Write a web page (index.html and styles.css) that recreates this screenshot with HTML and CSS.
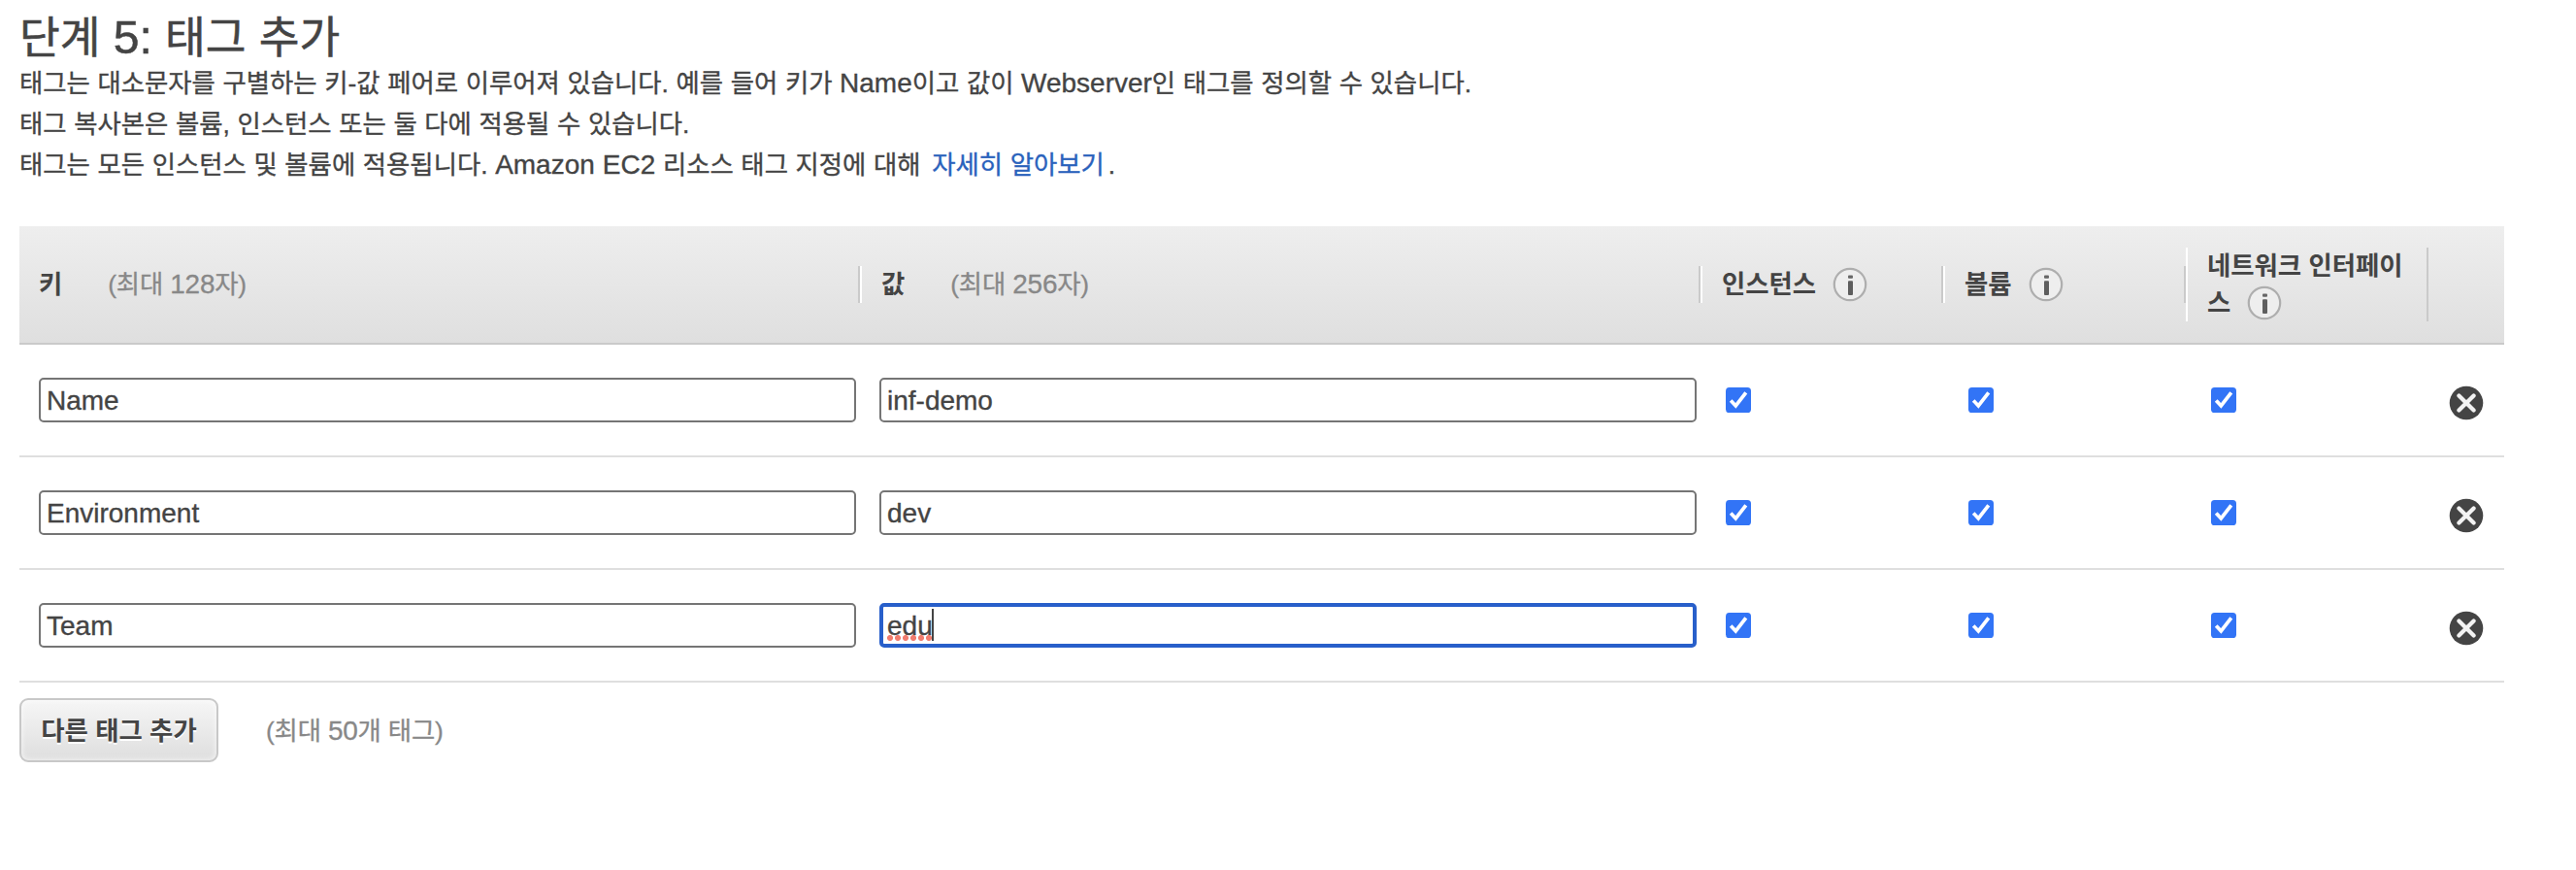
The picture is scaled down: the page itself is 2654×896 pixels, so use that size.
FILE: index.html
```html
<!DOCTYPE html>
<html lang="ko">
<head>
<meta charset="utf-8">
<title>단계 5: 태그 추가</title>
<link rel="stylesheet" href="styles.css">
</head>
<body>
<svg class="defs" width="0" height="0" aria-hidden="true">
  <symbol id="info" viewBox="0 0 36 36">
    <circle cx="18" cy="18" r="16.2" fill="#eee" stroke="#aeaeae" stroke-width="2.2"/>
    <rect x="16" y="8.4" width="5" height="3.4" rx="1" fill="#666"/>
    <rect x="16" y="14.2" width="5" height="14.8" rx="1" fill="#5e5e5e"/>
  </symbol>
  <symbol id="remove" viewBox="0 0 36 36">
    <circle cx="18" cy="18" r="17.3" fill="#444"/>
    <path d="M10.4 10.4 25.6 25.6M25.6 10.4 10.4 25.6" stroke="#f2f2f2" stroke-width="4.2" stroke-linecap="round"/>
  </symbol>
  <symbol id="check" viewBox="0 0 26 26">
    <rect width="26" height="26" rx="3.6" fill="#3274f6"/>
    <path d="M5.2 13.4 10.3 18.9 20.8 5.3" fill="none" stroke="#fff" stroke-width="3.7"/>
  </symbol>
</svg>
<main class="page">
  <h1 class="title">단계 <span class="latin">5:</span> 태그 추가</h1>
  <div class="intro">
    <p>태그는 대소문자를 구별하는 키-값 페어로 이루어져 있습니다. 예를 들어 키가 <span class="latin">Name</span>이고 값이 <span class="latin">Webserver</span>인 태그를 정의할 수 있습니다.</p>
    <p>태그 복사본은 볼륨, 인스턴스 또는 둘 다에 적용될 수 있습니다.</p>
    <p>태그는 모든 인스턴스 및 볼륨에 적용됩니다. <span class="latin">Amazon EC2</span> 리소스 태그 지정에 대해 <a class="link">자세히 알아보기</a>.</p>
  </div>

  <section class="table">
    <div class="row head">
      <div class="th">키<span class="hint">(최대 <span class="latin">128</span>자)</span></div>
      <div class="th">값<span class="hint">(최대 <span class="latin">256</span>자)</span></div>
      <div class="th">인스턴스<svg class="info"><use href="#info"/></svg></div>
      <div class="th">볼륨<svg class="info"><use href="#info"/></svg></div>
      <div class="th">네트워크 인터페이<br>스<svg class="info"><use href="#info"/></svg></div>
      <div class="th"></div>
    </div>
    <div class="row">
      <div class="td"><div class="field">Name</div></div>
      <div class="td"><div class="field">inf-demo</div></div>
      <div class="td"><svg class="check"><use href="#check"/></svg></div>
      <div class="td"><svg class="check"><use href="#check"/></svg></div>
      <div class="td"><svg class="check"><use href="#check"/></svg></div>
      <div class="td"><svg class="remove"><use href="#remove"/></svg></div>
    </div>
    <div class="row">
      <div class="td"><div class="field">Environment</div></div>
      <div class="td"><div class="field">dev</div></div>
      <div class="td"><svg class="check"><use href="#check"/></svg></div>
      <div class="td"><svg class="check"><use href="#check"/></svg></div>
      <div class="td"><svg class="check"><use href="#check"/></svg></div>
      <div class="td"><svg class="remove"><use href="#remove"/></svg></div>
    </div>
    <div class="row">
      <div class="td"><div class="field">Team</div></div>
      <div class="td"><div class="field focused"><span class="typed">edu</span></div></div>
      <div class="td"><svg class="check"><use href="#check"/></svg></div>
      <div class="td"><svg class="check"><use href="#check"/></svg></div>
      <div class="td"><svg class="check"><use href="#check"/></svg></div>
      <div class="td"><svg class="remove"><use href="#remove"/></svg></div>
    </div>
  </section>

  <div class="footer">
    <button class="add">다른 태그 추가</button>
    <span class="limit">(최대 <span class="latin">50</span>개 태그)</span>
  </div>
</main>
</body>
</html>
```

FILE: styles.css
```css
* { box-sizing: border-box; }

body {
  margin: 0;
  background: #fff;
  color: #444;
  font-family: "Liberation Sans", "Noto Sans CJK KR", sans-serif;
  font-size: 26.4px;
}

.defs { position: absolute; }

.page { padding: 14px 74px 0 20px; }

/* Latin runs are set slightly larger than the Hangul around them */
.latin { font-size: 1.06em; line-height: 1; }

.title {
  margin: 0;
  font-size: 45.4px;
  font-weight: 400;
  line-height: 51px;
  word-spacing: .6px;
  -webkit-text-stroke: .5px currentColor;
}

.intro { height: 168px; -webkit-text-stroke: .35px currentColor; }
.intro p { margin: 0; line-height: 42px; white-space: nowrap; word-spacing: .3px; }
.link { color: #2a62bc; margin: 0 4px 0 4px; }

.row {
  display: grid;
  grid-template-columns: 866px 866px 250px 250px 250px 78px;
  align-items: center;
  height: 116px;
  border-bottom: 2px solid #dfdfdf;
}

.head {
  height: 122px;
  background: linear-gradient(#eee, #dfdfdf);
  border-bottom-color: #cacaca;
}

.th {
  min-height: 38px;
  padding-left: 20px;
  border-left: 2px solid #fff;
  border-right: 2px solid #cacaca;
  font-weight: 700;
  line-height: 38px;
  white-space: nowrap;
}
.th:first-child { border-left-color: transparent; padding-left: 18px; }
.th:last-child { border: 0; }

.hint {
  margin-left: 47px;
  color: #888;
  font-weight: 400;
  letter-spacing: -.2px;
  -webkit-text-stroke: .3px currentColor;
}

.info {
  width: 36px;
  height: 36px;
  margin: -4px 0 -4px 17px;
  vertical-align: -9px;
  transform: translateY(-4px);
}

.td { padding-left: 20px; }
.td:nth-child(3), .td:nth-child(4), .td:nth-child(5) { padding-left: 26px; }
.td:last-child { padding-left: 21px; }

.field {
  width: 842px;
  height: 46px;
  padding: 1px 0 0 6px;
  border: 2px solid #757575;
  border-radius: 5px;
  font-size: 28px;
  line-height: 42px;
  -webkit-text-stroke: .35px currentColor;
}

.focused {
  padding-left: 4px;
  border: 4px solid #285fca;
  line-height: 38px;
}

.typed { position: relative; display: inline-block; }

/* spelling marks */
.typed::before {
  content: "";
  position: absolute;
  left: 0;
  top: 28px;
  width: 48px;
  height: 6px;
  background: radial-gradient(circle at 3px 3px, #f17c6e 2.7px, transparent 3.3px) 0 0 / 8px 6px repeat-x;
}

/* text caret */
.typed::after {
  content: "";
  position: absolute;
  left: 46px;
  top: 1px;
  width: 2px;
  height: 33px;
  background: #444;
}

.check { display: block; width: 26px; height: 26px; }
.remove { display: block; width: 36px; height: 36px; margin-top: 5px; }

.footer {
  display: flex;
  align-items: center;
  gap: 49px;
  padding-top: 16px;
}

.add {
  width: 205px;
  height: 66px;
  padding: 0 0 4px;
  border: 2px solid #c8c8c8;
  border-radius: 9px;
  background: linear-gradient(#f6f6f6, #dedede);
  box-shadow: inset 0 0 6px rgba(255, 255, 255, .8);
  color: #444;
  font: 700 26.4px "Liberation Sans", "Noto Sans CJK KR", sans-serif;
  text-shadow: 0 2px 0 #fff;
  white-space: nowrap;
}

.limit {
  padding-bottom: 4px;
  color: #888;
  letter-spacing: -.2px;
  -webkit-text-stroke: .3px currentColor;
}
```
